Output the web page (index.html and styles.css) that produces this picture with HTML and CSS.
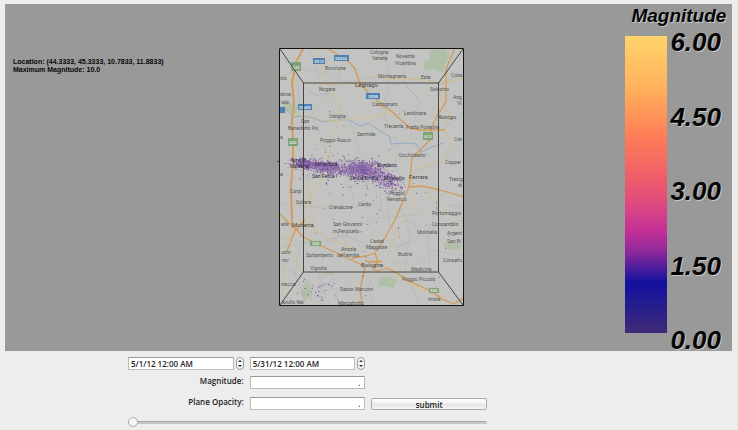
FILE: index.html
```html
<!DOCTYPE html>
<html lang="en">
<head>
<meta charset="utf-8">
<title>Earthquake viewer</title>
<link rel="stylesheet" href="styles.css">
</head>
<body>
<main class="view">
  <div class="info">
    <p>Location: (44.3333, 45.3333, 10.7833, 11.8833)</p>
    <p>Maximum Magnitude: 10.0</p>
  </div>
  <svg class="map" viewBox="276 46 190 262" role="img" aria-label="Earthquake map">
    <defs><clipPath id="plane"><rect x="279" y="48" width="185" height="258"/></clipPath></defs>
    <rect x="279" y="48" width="185" height="258" fill="#c3c3c1"/>
    <g clip-path="url(#plane)">
      <g class="park">
        <path d="M430 50l15-1 5 6-5 10-2 8-9-4-10 1-1-8 7-3zM282 105l8-3 8 5-3 7-8-2zM443 244l10-3 9 5-5 4-12-1zM379 277l8-1 10 4-4 8-9-2-5 1zM305 282l6 4 1 10-7 5-4-8zM327 271l7 2-1 3-7-2z"/>
      </g>
      <g class="minor" id="minor">
        <path d="M280 78l20-9 20 3 26 10 30-5 18 8 24-7 22 5 24-8M282 58l15 18 3 30 18 20 8 26 20 15 8 35-10 30-18 12-8 40M310 50l12 40 25 22 12 40 20 28 3 35 20 20M346 50l-8 30-22 30-14 15M385 50l5 30-8 30 18 40-15 35 5 40M410 50l-8 30 18 22-10 35 20 20M463 115l-30 20-28 5-35 22-28-3-30 20-33-5M463 145l-25 20-20 4-40 36-40 4-58-5M463 170l-30 35-18 10-44 4-30 18-60 10M463 220l-30 8-25 15-32 5-30-12-30 8-36-6M463 255l-30-5-18 15-25-4M400 205l10 30-6 36 15 32M440 200l-12 32 2 35 10 34M350 225l-10 35-18 15-2 30M380 265l-12 20 5 20M300 245l-5 30 12 30M283 268l20 9 18 15 30-7"/>
      </g>
      <g class="river">
        <path d="M280 107l7 3 6 7 10-1 10 2 10 4 14-2 13 0 10 6 8-3 12 8 10 6 1 7 14-1 11 1 5 8 8-4 15-5"/>
        <path class="stream" d="M308 90l8 6 12-3M405 85l15 15M450 205l12 2M405 220l15 7M395 248l14-5"/>
      </g>
      <g class="yellow">
        <path d="M318 51l3 13 2 12 9 15 8 13-2 20-5 14-4 21-7 21-14 20-5 15M280 76l18 6 35 3 16-2 18 5M293 113l14 3 20 5 18-1 26-3 22-7M372 76l16 3 29 0 22 4 24-4M443 82l-2 18 9 15-6 13 8 18-8 14-24 7-9 10 2 14 0 18-12 13-14 35M423 188l22 22 20 23M378 262l30 20 35 18M282 238l20-18 25 18 28 12M307 180l5 30 3 25M302 272l-15-25 5-18M285 260l-3 35"/>
      </g>
      <g class="casing"><path d="M303 49l-7 13-4 21 2 20-2 17 1 20v23l-2 24 1 33 0 8"/></g>
      <g class="orange">
        <path d="M303 49l-7 13-4 21 2 20-2 17 1 20v23l-2 24 1 33 0 8M280 214l8 8 7 6 8 9 16 8 18 8 23 11 5 4-3 12-2 11 3 16M305 219l-10 12-8 20M329 49l12 8 9 6 5 6 4 12 11 14 5 3 7 8 8 4 20 18 9 2 26 0M455 48l-9 21 0 33-8 12-7 14-1 12-18 18-3 29-14 33-12 21-8 12 3 9-6 6 5 3 10-3 12 6 10 7 22 10 11 8 12 5 11-7M409 187l14-1 17 4 24 7M352 258l14-2 10-3M365 261l7 1 10-1"/>
      </g>
      <g class="shield blue"><rect x="313" y="58" width="12" height="6"/><rect x="334" y="55" width="15" height="6"/><rect x="298" y="104" width="14" height="6"/><rect x="366" y="93" width="14" height="6"/><rect x="278" y="107" width="7" height="6"/></g>
      <g class="shield green"><rect x="291" y="62" width="10" height="9"/><rect x="288" y="138" width="10" height="8"/><rect x="423" y="132" width="10" height="8"/><rect x="310" y="241" width="11" height="5"/><rect x="429" y="288" width="10" height="5"/></g>
      <g class="tag">
        <text x="319" y="63">SS12</text><text x="341" y="60">SS434</text><text x="305" y="109">SS482</text><text x="373" y="98">SS88</text><text x="296" y="69">A22</text><text x="293" y="144">A22</text><text x="428" y="138">A13</text><text x="316" y="245">E45</text><text x="434" y="292">E45</text>
      </g>
      <g class="town">
        <text x="325" y="70">Bovolone</text><text x="370" y="54">Cologna</text><text x="372" y="60">Veneta</text><text x="396" y="58">Noventa</text><text x="395" y="65">Vicentina</text><text x="378" y="78">Montagnana</text><text x="421" y="79">Este</text><text x="451" y="77">Cons</text><text x="319" y="91">Nogara</text><text x="430" y="91">Solesino</text><text x="372" y="106">Castagnaro</text><text x="404" y="115">Lendinara</text><text x="453" y="99">Ang</text><text x="457" y="105">Vi</text><text x="329" y="118">Ostiglia</text><text x="301" y="123">San</text><text x="288" y="130">Benedetto Po</text><text x="384" y="128">Trecenta</text><text x="406" y="129">Fratta Polesine</text><text x="357" y="136">Sermide</text><text x="320" y="142">Poggio Rusco</text><text x="399" y="157">Occhiobello</text><text x="454" y="141">Cre</text><text x="445" y="164">Coppar</text><text x="449" y="181">Tresig</text><text x="458" y="187">di</text><text x="280" y="80">olo</text><text x="280" y="96">dova</text><text x="281" y="104">iale</text><text x="280" y="139">a</text><text x="280" y="176">a</text><text x="290" y="193">Carpi</text><text x="296" y="204">Soliera</text><text x="329" y="209">Crevalcore</text><text x="358" y="206">Cento</text><text x="389" y="195">Poggio</text><text x="387" y="201">Renatico</text><text x="432" y="215">Portomaggio</text><text x="333" y="226">San Giovanni</text><text x="333" y="233">in Persiceto</text><text x="432" y="226">Consandolo</text><text x="417" y="234">Molinella</text><text x="447" y="235">Argent</text><text x="447" y="243">San Bi</text><text x="370" y="243">Castel</text><text x="366" y="249">Maggiore</text><text x="398" y="256">Budrio</text><text x="341" y="251">Anzola</text><text x="337" y="257">dell'emilia</text><text x="306" y="257">Spilamberto</text><text x="443" y="262">Conselic</text><text x="310" y="270">Vignola</text><text x="411" y="271">Medicina</text><text x="402" y="281">Poggio Piccolo</text><text x="340" y="291">Sasso Marconi</text><text x="428" y="301">Imola</text><text x="338" y="305">Marzabotto</text><text x="282" y="304">avullo Nel</text><text x="281" y="286">naccia</text><text x="281" y="254">uolo</text><text x="282" y="262">no</text><text x="281" y="226">ella</text>
      </g>
      <g class="town big"><text x="292" y="227">Modena</text><text x="409" y="179">Ferrara</text><text x="361" y="267">Bologna</text><text x="355" y="87">Legnago</text><text x="438" y="119">Rovigo</text></g>
      <g id="quakes"></g>
      <g class="town dark"><text x="291" y="162">Novi di</text><text x="290" y="168">Modena</text><text x="315" y="166">Mirandola</text><text x="312" y="178">San Felice</text><text x="350" y="180">Finale Emilia</text><text x="377" y="167">Bondeno</text><text x="384" y="180">Mirabello</text></g>
    </g>
    <g class="box">
      <path class="outer" d="M279.500 48.500H463.500V305.500H279.500Z"/>
      <path d="M303.500 83H438.500V272H303.500ZM280 49L303.500 83M463 49L438.500 83M280 305L303.500 272M463 305L438.500 272"/>
    </g>
    <rect x="277" y="161" width="2" height="1" fill="#49427c"/>
  </svg>
  <section class="legend">
    <h1>Magnitude</h1>
    <div class="scale">
      <div class="ramp"></div>
      <div class="ticks"><span>6.00</span><span>4.50</span><span>3.00</span><span>1.50</span><span>0.00</span></div>
    </div>
  </section>
</main>
<form class="controls">
  <div class="date">
    <input type="text" aria-label="Start date" value="5/1/12 12:00 AM">
    <button type="button" class="stepper" aria-label="Step start date"><svg viewBox="0 0 6 11"><path d="M3 2l2 2H1zM3 9l2-2H1z"/></svg></button>
  </div>
  <div class="date">
    <input type="text" aria-label="End date" value="5/31/12 12:00 AM">
    <button type="button" class="stepper" aria-label="Step end date"><svg viewBox="0 0 6 11"><path d="M3 2l2 2H1zM3 9l2-2H1z"/></svg></button>
  </div>
  <label for="magnitude">Magnitude:</label>
  <input class="number" id="magnitude" type="text" value=".">
  <label for="opacity">Plane Opacity:</label>
  <input class="number" id="opacity" type="text" value=".">
  <button class="submit" type="submit">submit</button>
  <input class="slider" type="range" min="0" max="100" value="0" aria-label="Time">
</form>
<script src="quakes.js"></script>
</body>
</html>
```
FILE: styles.css
```css
* { box-sizing: border-box; }
body { margin: 0; padding: 4px 6px 0 5px; background: #ededed; font-family: "Open Sans", "Noto Sans", sans-serif; font-size: 8px; font-weight: 600; color: #222; }
.view { display: grid; grid-template-columns: 1fr 190px 1fr; align-items: start; padding: 0 2px 0 7px; background: #999; }
.info { padding: 54px 0 0 1px; font: bold 7px/8px "Liberation Sans", sans-serif; color: #080808; white-space: nowrap; }
.info p { margin: 0; }
.map { display: block; width: 100%; margin-top: 42px; }
.park { fill: #b0bfa7; }
.minor, .river, .yellow, .orange, .casing { fill: none; stroke-linejoin: round; }
.minor { stroke: #b3b3b0; stroke-width: 0.5; }
.river { stroke: #92a9c4; stroke-width: 1; }
.stream { stroke-width: 0.5; }
.yellow { stroke: #d6bd83; stroke-width: 0.8; }
.casing { stroke: #c9a878; stroke-width: 2; }
.orange { stroke: #d39a55; stroke-width: 1.3; }
.blue { fill: #4f80b5; }
.green { fill: #7fa376; }
.tag { font: bold 4px Roboto, sans-serif; fill: #dfe6e0; text-anchor: middle; }
.town { font: 5px Roboto, sans-serif; fill: #555; }
.big { font-size: 6px; fill: #444; }
.dark { fill: #29233f; }
.box { fill: none; stroke: #444; stroke-width: 1; }
.outer { stroke: #111; }
.legend { justify-self: end; padding-right: 9px; color: #050505; font-family: "Liberation Sans", sans-serif; font-weight: bold; font-style: italic; text-shadow: 1px 1px 0 #c8c8c8; }
.legend h1 { margin: 0 -8px 3px 6px; font-size: 19px; line-height: 24px; }
.scale { display: flex; gap: 3px; height: 320px; }
.ramp { width: 42px; margin: 5px 0 18px; background: linear-gradient(#ffd46c 0%, #ffb25c 17%, #ff8056 33%, #ef5c6a 48%, #df4b7e 56%, #c33098 66%, #8a2899 73%, #4e1d9e 78%, #12109f 83%, #211a92 89%, #402b78 100%); }
.ticks { display: flex; flex-direction: column; justify-content: space-between; font-size: 26px; line-height: 22px; }
.controls { display: grid; grid-template-columns: 1fr 1fr 1fr; column-gap: 6px; row-gap: 6px; padding: 6px 245px 0 123px; align-items: center; }
.controls input, .controls button { font: inherit; color: inherit; }
.date { display: flex; gap: 2px; }
.date input, .number { width: 100%; min-width: 0; height: 13px; margin: 0; padding: 0 2px; background: #fff; border: 1px solid #bbb; border-top-color: #999; outline: 0; }
.stepper { flex: none; width: 8px; height: 13px; padding: 0; border: 1px solid #999; border-radius: 4px; background: #f8f8f8; }
.stepper svg { display: block; width: 100%; height: 100%; fill: #333; }
label { grid-column: 1; text-align: right; line-height: 10px; padding-bottom: 3px; }
.number { text-align: right; padding-right: 4px; }
.submit { height: 12px; padding: 0; border: 1px solid #aaa; border-radius: 2px; background: linear-gradient(#fff, #eee 50%, #e4e4e4 51%, #f6f6f6); line-height: 8px; }
#opacity, label[for="opacity"], .submit { margin-top: 2px; }
.slider { appearance: none; grid-column: 1 / -1; width: 100%; height: 12px; margin: 0; background: transparent; }
.slider::-webkit-slider-runnable-track { height: 3px; border-radius: 2px; background: #c4c4c4; border-top: 1px solid #aaa; }
.slider::-webkit-slider-thumb { appearance: none; width: 10px; height: 10px; margin-top: -5px; border: 1px solid #aaa; border-radius: 50%; background: #f7f7f7; }
```
FILE: quakes.js
```js
// Seeded generator keeps the point cloud stable between loads.
let seed = 2012;
function random() {
  seed = (seed * 1664525 + 1013904223) % 4294967296;
  return seed / 4294967296;
}
function spread() {
  return random() + random() + random() - 1.5;
}
const colors = ["#6a4fa0", "#8a6ab0", "#7d5da6", "#6a54a4", "#a87bb0", "#a67aa2"];
// Each cluster: centre x, centre y, x spread, y spread, slope, count.
const clusters = [
  [306, 164, 13, 5, 0.1, 330],
  [329, 168, 18, 6, 0.15, 500],
  [361, 170, 17, 9, 0.1, 700],
  [385, 179, 16, 11, 0.4, 330],
  [340, 168, 50, 17, 0.1, 110],
  [322, 290, 18, 12, 0, 32],
  [365, 215, 80, 90, 0, 60]
];
const layer = document.getElementById("quakes");
for (const [cx, cy, sx, sy, slope, count] of clusters) {
  for (let i = 0; i < count; i++) {
    const dx = spread() * sx;
    const dot = document.createElementNS("http://www.w3.org/2000/svg", "circle");
    dot.setAttribute("cx", (cx + dx).toFixed(1));
    dot.setAttribute("cy", (cy + dx * slope + spread() * sy).toFixed(1));
    dot.setAttribute("r", "0.6");
    dot.setAttribute("fill", colors[Math.floor(random() * colors.length)]);
    layer.append(dot);
  }
}
```
